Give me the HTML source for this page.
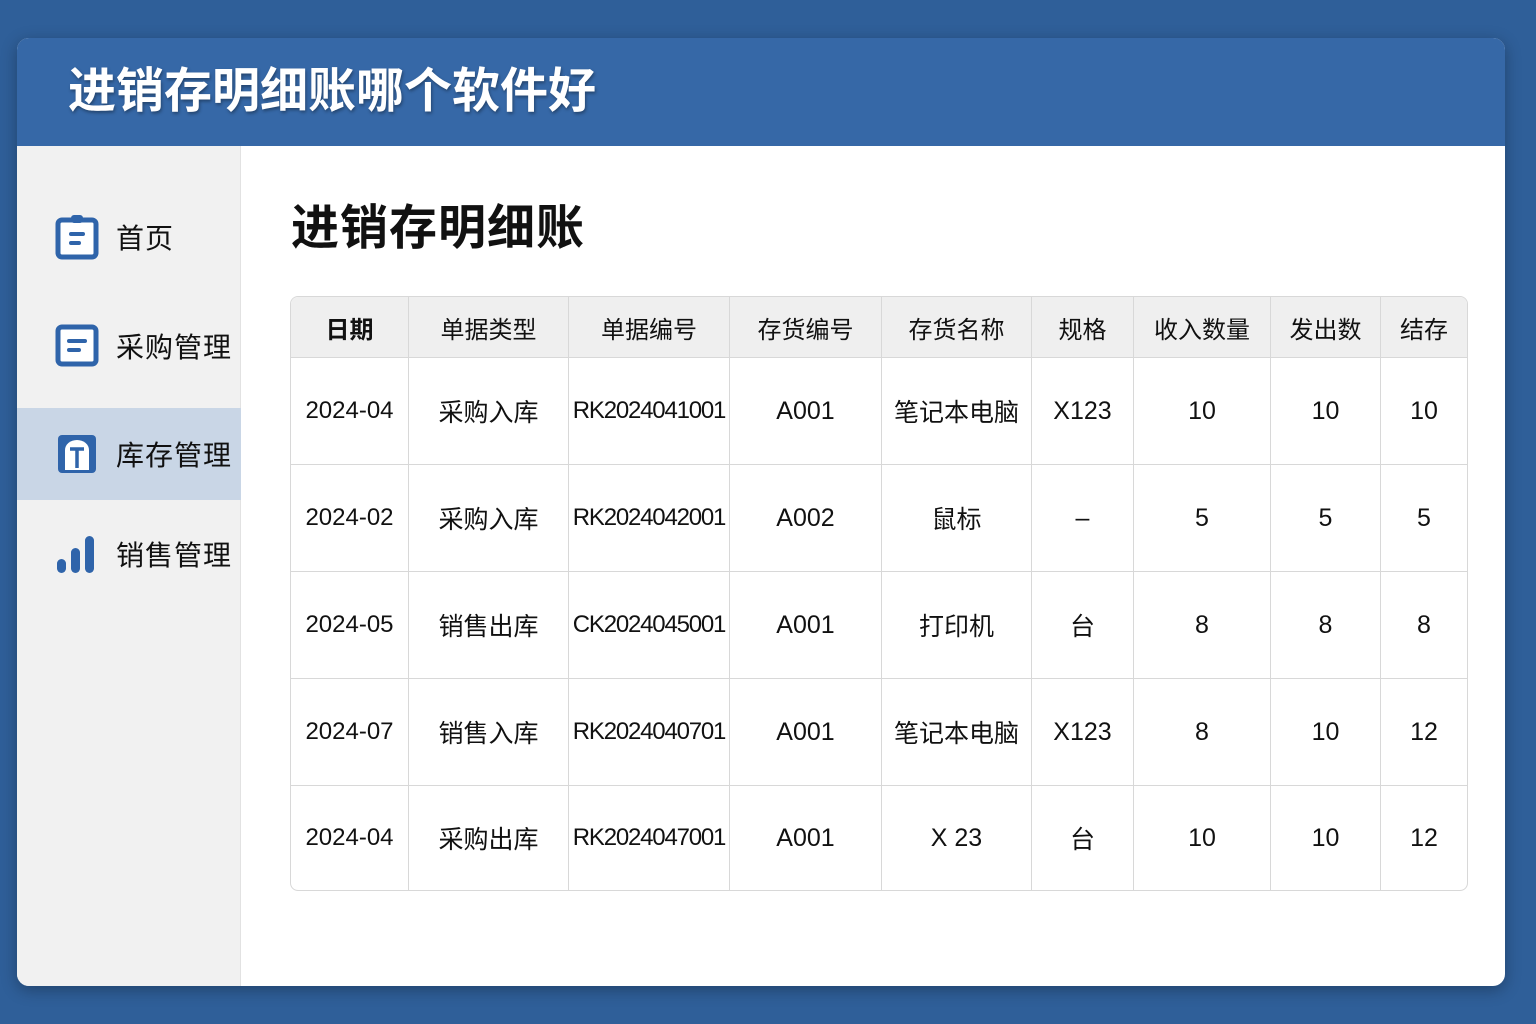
<!DOCTYPE html><html><head><meta charset="utf-8"><style>
*{margin:0;padding:0;box-sizing:border-box}
body{width:1536px;height:1024px;background:#2f5f99;font-family:"Liberation Sans","Noto Sans CJK SC",sans-serif;position:relative;overflow:hidden}
.card{position:absolute;left:17px;top:38px;width:1488px;height:948px;background:#fff;border-radius:12px;overflow:hidden;box-shadow:0 4px 16px rgba(0,0,0,.3)}
.hd{height:108px;background:#3668a7;color:#fff;font-weight:bold;font-size:48px;line-height:108px;padding-left:51px;text-shadow:1px 2px 3px rgba(0,0,0,.35)}
.sb{position:absolute;left:0;top:108px;width:224px;bottom:0;background:#f1f1f1;border-right:1px solid #e2e2e2}
.it{position:absolute;left:0;width:224px;height:92px;font-size:28px;color:#111}
.it svg{position:absolute;left:38px;top:50%;transform:translateY(-50%)}
.it span{position:absolute;left:99px;top:50%;transform:translateY(-50%);letter-spacing:1px}
.act{background:#c9d6e6}
h1{position:absolute;left:274px;top:150px;font-size:48px;font-weight:bold;color:#111;letter-spacing:1px}
table{position:absolute;left:273px;top:258px;width:1178px;table-layout:fixed;border-collapse:separate;border-spacing:0;border:1px solid #d8d8d8;border-radius:8px;overflow:hidden}
td,th{border-right:1px solid #d8d8d8;border-bottom:1px solid #d8d8d8;text-align:center;color:#111;font-weight:normal;white-space:nowrap;overflow:hidden}
th{height:61px;background:#efefef;font-size:24px}
th:first-child{font-weight:bold}
td{height:107px;font-size:25px}
tr td:last-child,tr th:last-child{border-right:none}
tr:last-child td{border-bottom:none;height:104px}
td.d{font-size:24px}
td.c{font-size:24px;letter-spacing:-1.2px}
</style></head><body>
<div class="card">
<div class="hd">进销存明细账哪个软件好</div>
<div class="sb">
<div class="it" style="top:45px"><svg width="44" height="46" viewBox="0 0 44 46"><rect x="3" y="6" width="38" height="37" rx="4" fill="#fff" stroke="#2f64aa" stroke-width="5"/><rect x="16" y="1" width="12" height="8" rx="3" fill="#2f64aa"/><rect x="14" y="18" width="16" height="4" rx="2" fill="#2f64aa"/><rect x="14" y="27" width="12" height="4" rx="2" fill="#2f64aa"/></svg><span>首页</span></div>
<div class="it" style="top:154px"><svg width="44" height="44" viewBox="0 0 44 44"><rect x="3" y="3" width="38" height="37" rx="4" fill="#fff" stroke="#2f64aa" stroke-width="5"/><rect x="12" y="15" width="20" height="4" rx="2" fill="#2f64aa"/><rect x="12" y="24" width="14" height="4" rx="2" fill="#2f64aa"/></svg><span>采购管理</span></div>
<div class="it act" style="top:262px"><svg width="44" height="44" viewBox="0 0 44 44"><rect x="3" y="3" width="38" height="38" rx="4" fill="#2f64aa"/><path d="M10 38V18a12 10 0 0 1 24 0v20z" fill="#fff"/><path d="M15 17h14M22 17v19" stroke="#2f64aa" stroke-width="3.5"/></svg><span>库存管理</span></div>
<div class="it" style="top:362px"><svg width="44" height="40" viewBox="0 0 44 40"><rect x="2" y="25" width="9" height="14" rx="4.5" fill="#2f64aa"/><rect x="16" y="14" width="9" height="25" rx="4.5" fill="#2f64aa"/><rect x="30" y="2" width="9" height="37" rx="4.5" fill="#2f64aa"/></svg><span>销售管理</span></div>
</div>
<h1>进销存明细账</h1>
<table>
<colgroup><col style="width:118px"><col style="width:160px"><col style="width:161px"><col style="width:152px"><col style="width:150px"><col style="width:102px"><col style="width:137px"><col style="width:110px"><col></colgroup>
<tr><th>日期</th><th>单据类型</th><th>单据编号</th><th>存货编号</th><th>存货名称</th><th>规格</th><th>收入数量</th><th>发出数</th><th>结存</th></tr>
<tr><td class="d">2024-04</td><td>采购入库</td><td class="c">RK2024041001</td><td>A001</td><td>笔记本电脑</td><td>X123</td><td>10</td><td>10</td><td>10</td></tr>
<tr><td class="d">2024-02</td><td>采购入库</td><td class="c">RK2024042001</td><td>A002</td><td>鼠标</td><td>–</td><td>5</td><td>5</td><td>5</td></tr>
<tr><td class="d">2024-05</td><td>销售出库</td><td class="c">CK2024045001</td><td>A001</td><td>打印机</td><td>台</td><td>8</td><td>8</td><td>8</td></tr>
<tr><td class="d">2024-07</td><td>销售入库</td><td class="c">RK2024040701</td><td>A001</td><td>笔记本电脑</td><td>X123</td><td>8</td><td>10</td><td>12</td></tr>
<tr><td class="d">2024-04</td><td>采购出库</td><td class="c">RK2024047001</td><td>A001</td><td>X 23</td><td>台</td><td>10</td><td>10</td><td>12</td></tr>
</table>
</div>
</body></html>
